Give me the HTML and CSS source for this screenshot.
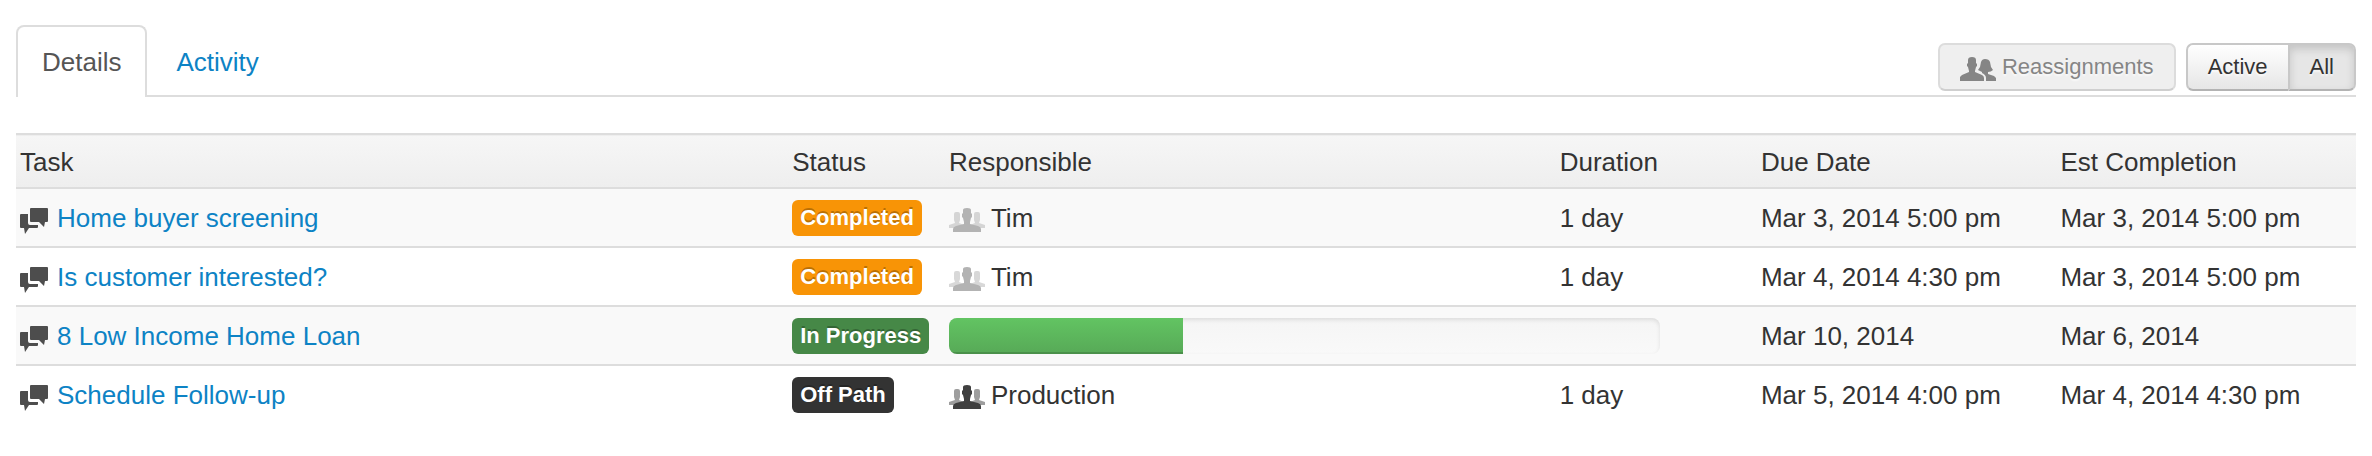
FILE: index.html
```html
<!DOCTYPE html>
<html lang="en">
<head>
<meta charset="utf-8">
<title>Tasks</title>
<link rel="stylesheet" href="styles.css">
</head>
<body>
<svg class="sprite" aria-hidden="true">
  <symbol id="chat" viewBox="0 0 28 26">
    <path d="M1 6H8V15Q8 17 10 17H18V19Q18 20 17 20H9L5 26L4 20H1Q0 20 0 19V7Q0 6 1 6Z"/>
    <path d="M11 0H27Q28 0 28 1V13Q28 14 27 14H25L24 19L19 14H11Q10 14 10 13V1Q10 0 11 0Z"/>
  </symbol>
  <symbol id="group" viewBox="0 0 36 24">
    <g opacity=".5">
      <path d="M5 6Q5 4 7 4H9Q11 4 11 6V12L10 15L15 17V20H0V17L6 15L5 12Z"/>
      <path d="M31 6Q31 4 29 4H27Q25 4 25 6V12L26 15L21 17V20H36V17L30 15L31 12Z"/>
    </g>
    <path d="M14 2Q14 0 18 0Q22 0 22 2V5L23 6V9L22 10L21 14V16L29 18Q32 19 32 21V24H4V21Q4 19 7 18L15 16V14L14 10L13 9V6L14 5Z"/>
  </symbol>
  <symbol id="pair" viewBox="0 0 36 24">
    <path d="M8 3Q8 0 12 0Q16 0 16 3V6L17 7V9L16 10L15 14V15L22 18Q24 19 24 21V24H0V20L2 18L9 15V14L8 10L7 9V7L8 6Z"/>
    <path d="M21 5Q22 2 25 2Q29 2 30 5L31 10L33 13Q31 15 28 15V17L34 19L36 21V24H26V21Q26 18 22 16V15L18 13L20 10Z"/>
  </symbol>
</svg>
<main class="page">
  <header class="bar">
    <nav class="tabs">
      <a class="tab tab-active" href="#details">Details</a>
      <a class="tab" href="#activity">Activity</a>
    </nav>
    <div class="tools">
      <button class="btn btn-disabled" type="button" disabled><svg class="people"><use href="#pair"/></svg>Reassignments</button>
      <div class="group">
        <button class="btn" type="button">Active</button>
        <button class="btn pressed" type="button">All</button>
      </div>
    </div>
  </header>
  <table class="tasks">
    <colgroup><col class="c-task"><col class="c-status"><col class="c-resp"><col class="c-dur"><col class="c-due"><col></colgroup>
    <thead>
      <tr><th>Task</th><th>Status</th><th>Responsible</th><th>Duration</th><th>Due Date</th><th>Est Completion</th></tr>
    </thead>
    <tbody>
      <tr>
        <td><div class="item"><svg class="chat"><use href="#chat"/></svg><a href="#t1">Home buyer screening</a></div></td>
        <td><div class="item"><span class="label orange">Completed</span></div></td>
        <td><div class="item"><svg class="people faded"><use href="#group"/></svg>Tim</div></td>
        <td>1 day</td><td>Mar 3, 2014 5:00 pm</td><td>Mar 3, 2014 5:00 pm</td>
      </tr>
      <tr>
        <td><div class="item"><svg class="chat"><use href="#chat"/></svg><a href="#t2">Is customer interested?</a></div></td>
        <td><div class="item"><span class="label orange">Completed</span></div></td>
        <td><div class="item"><svg class="people faded"><use href="#group"/></svg>Tim</div></td>
        <td>1 day</td><td>Mar 4, 2014 4:30 pm</td><td>Mar 3, 2014 5:00 pm</td>
      </tr>
      <tr>
        <td><div class="item"><svg class="chat"><use href="#chat"/></svg><a href="#t3">8 Low Income Home Loan</a></div></td>
        <td><div class="item"><span class="label green">In Progress</span></div></td>
        <td colspan="2"><div class="item"><div class="progress" role="progressbar" aria-label="Progress" aria-valuenow="33" aria-valuemin="0" aria-valuemax="100"><div class="fill" style="width:33%"></div></div></div></td>
        <td>Mar 10, 2014</td><td>Mar 6, 2014</td>
      </tr>
      <tr>
        <td><div class="item"><svg class="chat"><use href="#chat"/></svg><a href="#t4">Schedule Follow-up</a></div></td>
        <td><div class="item"><span class="label dark">Off Path</span></div></td>
        <td><div class="item"><svg class="people"><use href="#group"/></svg>Production</div></td>
        <td>1 day</td><td>Mar 5, 2014 4:00 pm</td><td>Mar 4, 2014 4:30 pm</td>
      </tr>
    </tbody>
  </table>
</main>
</body>
</html>
```
FILE: styles.css
```css
* { box-sizing: border-box; }
body {
  margin: 0;
  background: #fff;
  color: #333;
  font: 26px/40px "Liberation Sans", Arial, sans-serif;
}
a { color: #0d83c5; text-decoration: none; }
svg { flex: none; fill: currentColor; }
.sprite { position: absolute; width: 0; height: 0; }
.page { padding: 25px 16px 30px; }

.bar {
  display: flex;
  justify-content: space-between;
  align-items: flex-end;
  margin-bottom: 36px;
  border-bottom: 2px solid #ddd;
}
.tabs { display: flex; gap: 3px; margin-bottom: -2px; }
.tab {
  padding: 15px 24px;
  border: 2px solid transparent;
  border-bottom: 0;
  border-radius: 8px 8px 0 0;
}
.tab-active { background: #fff; border-color: #ddd; color: #555; }

.tools { display: flex; gap: 10px; margin-bottom: 4px; }
.btn {
  display: flex;
  align-items: center;
  gap: 6px;
  height: 48px;
  padding: 0 20px;
  border: 2px solid #c8c8c8;
  border-bottom-color: #b3b3b3;
  border-radius: 7px;
  background: linear-gradient(#fff, #e6e6e6);
  color: #333;
  font: inherit;
  font-size: 22px;
  text-shadow: 0 2px 2px rgba(255, 255, 255, .75);
}
.btn-disabled {
  border-color: #dcdcdc;
  border-bottom-color: #cfcfcf;
  background: #efefef;
  color: #858585;
}
.group { display: flex; }
.group .btn:first-child { border-right: 0; border-radius: 7px 0 0 7px; }
.group .btn:last-child { border-radius: 0 7px 7px 0; }
.pressed {
  background: #e6e6e6;
  box-shadow: inset 0 4px 8px rgba(0, 0, 0, .15);
}

.tasks { width: 100%; table-layout: fixed; border-collapse: collapse; }
.c-task { width: 33%; }
.c-status { width: 6.7%; }
.c-resp { width: 26.1%; }
.c-dur { width: 8.6%; }
.c-due { width: 12.8%; }
.tasks th, .tasks td {
  padding: 9px 4px 8px;
  text-align: left;
  font-weight: normal;
  white-space: nowrap;
}
.tasks tr { border-top: 2px solid #ddd; }
.tasks th { padding: 7px 4px 5px; }
.tasks thead tr { background: linear-gradient(#f6f6f6, #eee); }
.tasks tbody tr:nth-child(odd) { background: #f9f9f9; }

.item { display: flex; align-items: center; height: 40px; }
.chat { width: 28px; height: 26px; margin: 6px 9px 0 0; color: #4d4d4d; }
.people { width: 36px; height: 24px; }
.item .people { margin: 4px 6px 0 0; color: #404040; }
.item .faded { color: #b3b3b3; }
.btn .people { margin-top: 4px; }

.label {
  padding: 0 8px;
  border-radius: 6px;
  color: #fff;
  font-size: 22px;
  font-weight: bold;
  line-height: 36px;
  text-shadow: 0 -2px 0 rgba(0, 0, 0, .25);
}
.orange { background: #f89406; }
.green { background: #468847; }
.dark { background: #333; }

.progress {
  width: 88.4%;
  height: 36px;
  overflow: hidden;
  border-radius: 8px;
  background: linear-gradient(#f5f5f5, #f9f9f9);
  box-shadow: inset 0 2px 4px rgba(0, 0, 0, .1);
}
.fill {
  height: 100%;
  background: linear-gradient(#62c462, #57a957);
  box-shadow: inset 0 -2px 0 rgba(0, 0, 0, .15);
}
```
